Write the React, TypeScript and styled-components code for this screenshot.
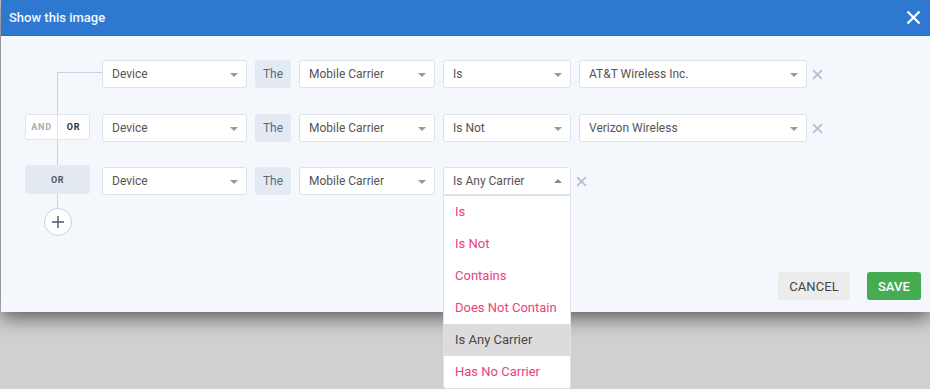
import styled, { createGlobalStyle } from "styled-components";

const GlobalStyle = createGlobalStyle`
  html, body {
    margin: 0;
    padding: 0;
    min-height: 100vh;
    background: #d0d0d0;
    font-family: Roboto, "Liberation Sans", Arial, sans-serif;
  }
  #root { min-height: 100vh; }
  * { box-sizing: border-box; }
`;

const Modal = styled.div`
  position: relative;
  margin-left: 1px;
  width: 929px;
  background: #f4f8fd;
  box-shadow: 0 6px 18px rgba(0, 0, 0, 0.55);
`;

const Header = styled.div`
  display: flex;
  align-items: center;
  justify-content: space-between;
  height: 36px;
  padding: 0 9px 0 8px;
  background: #2f78d1;
  border-bottom: 1px solid #2a6cc2;
`;

const Title = styled.h1`
  margin: 0;
  font-size: 13px;
  font-weight: 500;
  color: #f2f6fc;
`;

const CloseButton = styled.button`
  display: flex;
  padding: 0;
  border: 0;
  background: none;
  cursor: pointer;
`;

const Body = styled.div`
  padding: 24px 9px 12px 24px;
`;

const Rules = styled.div`
  display: flex;
  flex-direction: column;
`;

const Row = styled.div<{ $height: number }>`
  display: flex;
  align-items: flex-start;
  gap: 8px;
  height: ${(p) => p.$height}px;
`;

const Connector = styled.div`
  display: flex;
  flex-direction: column;
  align-self: stretch;
  width: 65px;
  margin-right: 4px;
`;

const Branch = styled.div`
  flex: 1;
  margin: 12px -12px 0 32px;
  border-left: 1px solid #c6d1dc;
  border-top: 1px solid #c6d1dc;
`;

const Line = styled.div`
  flex: 1;
  width: 1px;
  margin-left: 32px;
  background: #c6d1dc;
`;

const Toggle = styled.div`
  display: flex;
  height: 26px;
  background: #fff;
  border: 1px solid #dfe5ec;
  border-radius: 2px;
`;

const ToggleOption = styled.div<{ $active?: boolean }>`
  flex: 1;
  display: flex;
  align-items: center;
  justify-content: center;
  font-size: 9px;
  font-weight: 700;
  letter-spacing: 0.8px;
  color: ${(p) => (p.$active ? "#2a2f36" : "#a2acb8")};
  & + & {
    border-left: 1px solid #dfe5ec;
  }
`;

const OrBlock = styled.div`
  display: flex;
  align-items: center;
  justify-content: center;
  height: 29px;
  margin-top: -2px;
  background: #e3eaf2;
  border-radius: 3px;
  font-size: 9px;
  font-weight: 700;
  letter-spacing: 0.6px;
  color: #4c5664;
`;

const SelectBox = styled.div<{ $width: number; $open?: boolean }>`
  position: relative;
  display: flex;
  align-items: center;
  justify-content: space-between;
  width: ${(p) => p.$width}px;
  height: 28px;
  padding: 0 8px 0 9px;
  background: #fff;
  border: 1px solid #dbe2ea;
  border-radius: ${(p) => (p.$open ? "3px 3px 0 0" : "3px")};
  font-size: 12px;
  color: #555;
`;

const Caret = styled.span<{ $up?: boolean }>`
  width: 0;
  height: 0;
  border-left: 4px solid transparent;
  border-right: 4px solid transparent;
  ${(p) =>
    p.$up
      ? "border-bottom: 4px solid #8a8a8a;"
      : "border-top: 4px solid #9a9a9a;"}
  margin-top: ${(p) => (p.$up ? "-1px" : "2px")};
`;

const Label = styled.div`
  display: flex;
  align-items: center;
  justify-content: center;
  width: 36px;
  height: 28px;
  background: #e3eaf2;
  border-radius: 3px;
  font-size: 12px;
  color: #5a6a7e;
`;

const Remove = styled.button`
  display: flex;
  align-items: center;
  height: 28px;
  margin-left: -3px;
  padding: 0;
  border: 0;
  background: none;
  cursor: pointer;
`;

const Menu = styled.ul`
  position: absolute;
  top: 27px;
  left: -1px;
  right: -1px;
  z-index: 2;
  margin: 0;
  padding: 0;
  list-style: none;
  background: #fff;
  border: 1px solid #dbe2ea;
  border-radius: 0 0 3px 3px;
`;

const MenuItem = styled.li<{ $selected?: boolean }>`
  display: flex;
  align-items: center;
  height: 32px;
  padding: 0 11px 2px;
  font-size: 13px;
  color: ${(p) => (p.$selected ? "#484848" : "#e8437d")};
  background: ${(p) => (p.$selected ? "#dcdcdc" : "transparent")};
`;

const AddRow = styled.div`
  display: flex;
  width: 65px;
  padding-left: 19px;
`;

const AddButton = styled.button`
  display: flex;
  align-items: center;
  justify-content: center;
  width: 28px;
  height: 28px;
  padding: 0;
  background: #fff;
  border: 1px solid #c6d1dc;
  border-radius: 50%;
  cursor: pointer;
`;

const Footer = styled.div`
  display: flex;
  justify-content: flex-end;
  gap: 17px;
  margin-top: 36px;
`;

const Button = styled.button<{ $primary?: boolean }>`
  height: 28px;
  padding: 0 11px;
  border: 0;
  border-radius: 3px;
  font-family: inherit;
  font-size: 13px;
  font-weight: ${(p) => (p.$primary ? 500 : 400)};
  letter-spacing: 0.1px;
  text-transform: uppercase;
  color: ${(p) => (p.$primary ? "#fff" : "#444")};
  background: ${(p) => (p.$primary ? "#45ac52" : "#ececec")};
  cursor: pointer;
`;

function Cross({ size, color, width }: { size: number; color: string; width: number }) {
  return (
    <svg width={size} height={size} viewBox="0 0 10 10">
      <path d="M1 1L9 9M9 1L1 9" stroke={color} strokeWidth={width} strokeLinecap="butt" />
    </svg>
  );
}

function Select({ value, width }: { value: string; width: number }) {
  return (
    <SelectBox $width={width}>
      <span>{value}</span>
      <Caret />
    </SelectBox>
  );
}

const operators = ["Is", "Is Not", "Contains", "Does Not Contain", "Is Any Carrier", "Has No Carrier"];

function RuleFields({ operator, value, open }: { operator: string; value?: string; open?: boolean }) {
  return (
    <>
      <Select value="Device" width={145} />
      <Label>The</Label>
      <Select value="Mobile Carrier" width={136} />
      {open ? (
        <SelectBox $width={128} $open>
          <span>{operator}</span>
          <Caret $up />
          <Menu>
            {operators.map((op) => (
              <MenuItem key={op} $selected={op === operator}>
                {op}
              </MenuItem>
            ))}
          </Menu>
        </SelectBox>
      ) : (
        <Select value={operator} width={128} />
      )}
      {value && <Select value={value} width={228} />}
      <Remove>
        <Cross size={11} color="#b6c0cb" width={1.6} />
      </Remove>
    </>
  );
}

export default function App() {
  return (
    <>
      <GlobalStyle />
      <Modal>
        <Header>
          <Title>Show this image</Title>
          <CloseButton>
            <Cross size={15} color="#ffffff" width={1.5} />
          </CloseButton>
        </Header>
        <Body>
          <Rules>
            <Row $height={54}>
              <Connector>
                <Branch />
              </Connector>
              <RuleFields operator="Is" value="AT&T Wireless Inc." />
            </Row>
            <Row $height={53}>
              <Connector>
                <Toggle>
                  <ToggleOption>AND</ToggleOption>
                  <ToggleOption $active>OR</ToggleOption>
                </Toggle>
                <Line />
              </Connector>
              <RuleFields operator="Is Not" value="Verizon Wireless" />
            </Row>
            <Row $height={41}>
              <Connector>
                <OrBlock>OR</OrBlock>
                <Line />
              </Connector>
              <RuleFields operator="Is Any Carrier" open />
            </Row>
            <AddRow>
              <AddButton>
                <svg width="14" height="14" viewBox="0 0 14 14">
                  <path d="M7 1V13M1 7H13" stroke="#4a5a70" strokeWidth="1.4" />
                </svg>
              </AddButton>
            </AddRow>
          </Rules>
          <Footer>
            <Button>Cancel</Button>
            <Button $primary>Save</Button>
          </Footer>
        </Body>
      </Modal>
    </>
  );
}
